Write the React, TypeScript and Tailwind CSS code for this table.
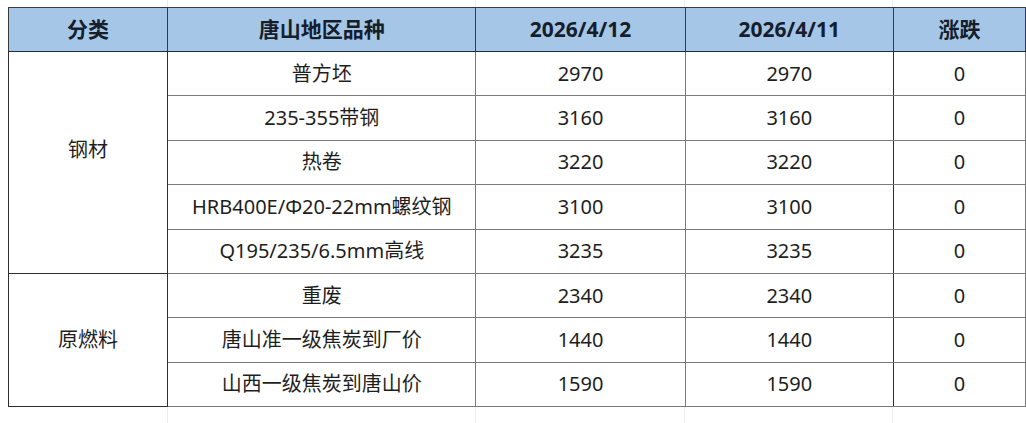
import React from 'react';

interface PriceRow {
  name: string;
  today: number;
  yesterday: number;
  change: number;
}

const steel: PriceRow[] = [
  { name: '普方坯', today: 2970, yesterday: 2970, change: 0 },
  { name: '235-355带钢', today: 3160, yesterday: 3160, change: 0 },
  { name: '热卷', today: 3220, yesterday: 3220, change: 0 },
  { name: 'HRB400E/Φ20-22mm螺纹钢', today: 3100, yesterday: 3100, change: 0 },
  { name: 'Q195/235/6.5mm高线', today: 3235, yesterday: 3235, change: 0 },
];

const raw: PriceRow[] = [
  { name: '重废', today: 2340, yesterday: 2340, change: 0 },
  { name: '唐山准一级焦炭到厂价', today: 1440, yesterday: 1440, change: 0 },
  { name: '山西一级焦炭到唐山价', today: 1590, yesterday: 1590, change: 0 },
];

const groups = [
  { label: '钢材', rows: steel, pad: 'pb-[24px]' },
  { label: '原燃料', rows: raw, pad: 'pb-0' },
];

const cell = 'h-[44.4px] p-0 text-center border border-[#7a7a7a]';
const head = 'h-[44px] p-0 border border-[#3a3a3a] border-b-[1.5px] border-b-[#1f2a3a]';

// faint spreadsheet gridlines peeking out above / below the table
const GridStrip = ({ h }: { h: string }) => (
  <div className={'flex ' + h}>
    <div className="w-[159px] shrink-0" />
    <div className="w-[308px] shrink-0 border-l border-[#ececec]" />
    <div className="w-[209px] shrink-0 border-l border-[#ececec]" />
    <div className="w-[208px] shrink-0 border-l border-[#ececec]" />
    <div className="w-[132px] shrink-0 border-l border-[#ececec]" />
  </div>
);

const App = () => {
  return (
    <div
      className="w-[1026px] h-[423px] bg-white overflow-hidden pl-[8px] flex flex-col"
      style={{ fontFamily: '"Noto Sans", "Noto Sans CJK SC", sans-serif' }}
    >
      <GridStrip h="h-[7px]" />
      <table className="table-fixed border-collapse border-[1.5px] border-[#2e2e2e] text-[20px] text-[#1e1e1e]">
        <colgroup>
          <col className="w-[159px]" />
          <col className="w-[308px]" />
          <col className="w-[209px]" />
          <col className="w-[208px]" />
          <col className="w-[132px]" />
        </colgroup>
        <thead>
          <tr className="bg-[#a5c6e6] font-bold text-[21px] text-[#161d2b]">
            <th className={head}>分类</th>
            <th className={head}>唐山地区品种</th>
            <th className={head}>2026/4/12</th>
            <th className={head}>2026/4/11</th>
            <th className={head}>涨跌</th>
          </tr>
        </thead>
        <tbody>
          {groups.map((g) =>
            g.rows.map((r, i) => (
              <tr key={g.label + r.name}>
                {i === 0 && (
                  <td
                    rowSpan={g.rows.length}
                    className={'p-0 text-center border border-[#2e2e2e] ' + g.pad}
                  >
                    {g.label}
                  </td>
                )}
                <td className={cell}>{r.name}</td>
                <td className={cell}>{r.today}</td>
                <td className={cell + ' border-r-[#2e2e2e]'}>{r.yesterday}</td>
                <td className={cell}>{r.change}</td>
              </tr>
            ))
          )}
        </tbody>
      </table>
      <GridStrip h="flex-1" />
    </div>
  );
};

export default App;
